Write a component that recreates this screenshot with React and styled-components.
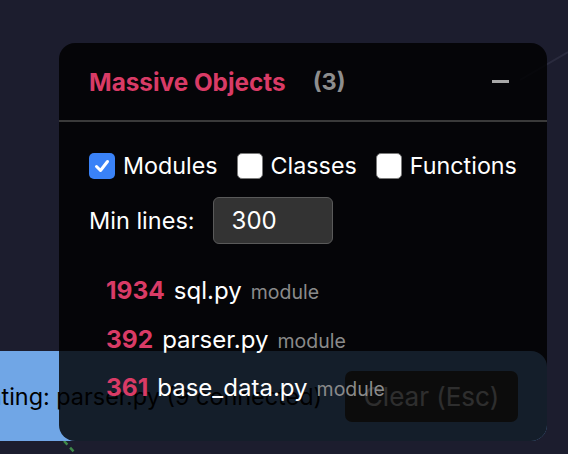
import React from 'react';
import styled, {createGlobalStyle} from 'styled-components';

const GlobalStyle = createGlobalStyle`
  html, body {
    margin: 0;
    padding: 0;
  }
  body {
    background: #1c1d2e;
    font-family: Inter, "Noto Sans", sans-serif;
  }
`;

const Canvas = styled.div`
  position: relative;
  width: 568px;
  height: 454px;
  overflow: hidden;
  background: #1c1d2e;
`;

const Graph = styled.svg`
  position: absolute;
  inset: 0;
`;

const StatusBar = styled.div`
  position: absolute;
  right: 21px;
  bottom: 13px;
  height: 90px;
  display: flex;
  align-items: center;
  gap: 23px;
  padding: 0 29px 0 40px;
  background: #70a6e6;
  border-radius: 16px;
  white-space: nowrap;
`;

const StatusText = styled.span`
  font-size: 23.4px;
  color: #000;
`;

const ClearButton = styled.button`
  width: 173px;
  height: 51px;
  border: none;
  border-radius: 7px;
  background: #434343;
  color: #fff;
  font-family: Inter, sans-serif;
  font-size: 26px;
`;

const Panel = styled.div`
  position: absolute;
  top: 43px;
  right: 21px;
  bottom: 13px;
  width: 488px;
  background: rgba(0, 0, 0, 0.82);
  border-radius: 16px;
  display: flex;
  flex-direction: column;
  color: #fff;
`;

const Header = styled.div`
  height: 77px;
  display: flex;
  align-items: center;
  padding: 0 38px 0 30px;
  border-bottom: 2px solid #3a3a3a;
`;

const Title = styled.span`
  font-size: 24.3px;
  font-weight: 700;
  color: #d93b66;
`;

const Count = styled.span`
  margin-left: 27px;
  font-size: 23.5px;
  font-weight: 700;
  color: #8e8e8e;
`;

const CollapseButton = styled.button`
  margin-left: auto;
  width: 17px;
  height: 17px;
  padding: 0;
  border: none;
  background: transparent;
  display: flex;
  align-items: center;

  &::before {
    content: '';
    width: 17px;
    height: 3px;
    background: #a8a8a8;
  }
`;

const Body = styled.div`
  padding: 29px 30px 0 30px;
  display: flex;
  flex-direction: column;
`;

const FilterRow = styled.div`
  display: flex;
  align-items: center;
  gap: 19px;
`;

const CheckLabel = styled.label`
  display: flex;
  align-items: center;
  gap: 8px;
  font-size: 23.3px;
`;

const Box = styled.span`
  width: 26px;
  height: 26px;
  box-sizing: border-box;
  border-radius: 5px;
  display: flex;
  align-items: center;
  justify-content: center;
  background: ${p => (p.checked ? '#3a82f7' : '#fff')};
  border: ${p => (p.checked ? 'none' : '1.5px solid #7a7a7a')};
`;

const LinesRow = styled.div`
  margin-top: 17px;
  display: flex;
  align-items: center;
  gap: 18px;
  font-size: 23.5px;
`;

const LinesInput = styled.input`
  width: 120px;
  height: 47px;
  box-sizing: border-box;
  padding: 0 18px;
  border: 1px solid #5a5a5a;
  border-radius: 6px;
  background: #333;
  color: #fff;
  font-family: Inter, sans-serif;
  font-size: 24px;
  outline: none;
`;

const List = styled.div`
  margin-top: 31px;
  padding-left: 17px;
  display: flex;
  flex-direction: column;
`;

const Item = styled.div`
  height: 48.5px;
  display: flex;
  align-items: baseline;
  gap: 9px;
`;

const Lines = styled.span`
  font-size: 24.5px;
  font-weight: 700;
  color: #d93b66;
`;

const Name = styled.span`
  font-size: 24px;
  color: #fff;
`;

const Kind = styled.span`
  font-size: 19.5px;
  color: #8a8a8a;
`;

const filters = [
    {label: 'Modules', checked: true},
    {label: 'Classes', checked: false},
    {label: 'Functions', checked: false},
];

const objects = [
    {lines: 1934, name: 'sql.py', kind: 'module'},
    {lines: 392, name: 'parser.py', kind: 'module'},
    {lines: 361, name: 'base_data.py', kind: 'module'},
];

function Check({checked}) {
    return (
        <Box checked={checked}>
            {checked &&
                <svg width="18" height="18" viewBox="0 0 18 18">
                    <path d="M3.5 9.5 L7.5 13.5 L14.5 4.5" fill="none" stroke="#fff" strokeWidth="3"
                          strokeLinecap="round" strokeLinejoin="round"/>
                </svg>
            }
        </Box>
    );
}

export default function App() {
    return (
        <>
            <GlobalStyle/>
            <Canvas>
                <Graph width="568" height="454">
                    <line x1="520" y1="80" x2="568" y2="52" stroke="#2a2b3e" strokeWidth="2"/>
                    <line x1="64" y1="441" x2="76" y2="454" stroke="#3f8a4a" strokeWidth="2.5" strokeDasharray="5 4"/>
                </Graph>
                <StatusBar>
                    <StatusText>Highlighting: parser.py (9 connected)</StatusText>
                    <ClearButton>Clear (Esc)</ClearButton>
                </StatusBar>
                <Panel>
                    <Header>
                        <Title>Massive Objects</Title>
                        <Count>(3)</Count>
                        <CollapseButton aria-label="Collapse"/>
                    </Header>
                    <Body>
                        <FilterRow>
                            {filters.map(f =>
                                <CheckLabel key={f.label}>
                                    <Check checked={f.checked}/>
                                    {f.label}
                                </CheckLabel>
                            )}
                        </FilterRow>
                        <LinesRow>
                            Min lines:
                            <LinesInput defaultValue="300"/>
                        </LinesRow>
                        <List>
                            {objects.map(o =>
                                <Item key={o.name}>
                                    <Lines>{o.lines}</Lines>
                                    <Name>{o.name}</Name>
                                    <Kind>{o.kind}</Kind>
                                </Item>
                            )}
                        </List>
                    </Body>
                </Panel>
            </Canvas>
        </>
    );
}
